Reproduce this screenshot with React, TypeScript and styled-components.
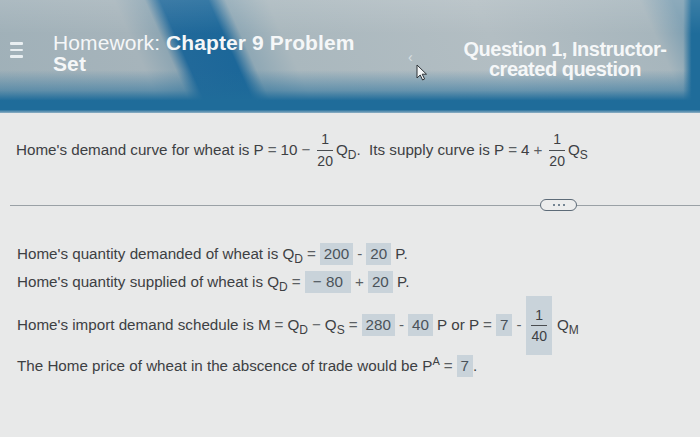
import type { FC, ReactNode } from 'react';
import styled, { createGlobalStyle } from 'styled-components';

const GlobalStyle = createGlobalStyle`
  html, body {
    margin: 0;
    padding: 0;
    background: #e8e9e9;
  }
  body {
    font-family: 'Liberation Sans', Arial, sans-serif;
    color: #3d4043;
  }
`;

const Page = styled.div`
  width: 700px;
  height: 437px;
  overflow: hidden;
  background: #e8e9e9;
`;

const Header = styled.header`
  height: 113px;
  display: flex;
  align-items: flex-start;
  padding: 32px 0 0 10px;
  box-sizing: border-box;
  color: #f5f7f8;
  background:
    linear-gradient(to bottom, rgba(255, 255, 255, 0.12) 0, transparent 30%, transparent 62%, rgba(31, 108, 154, 0.5) 80%, #1f6c9a 89%, #1f6c9a 97%, #8fb0c4 100%),
    linear-gradient(to right, transparent 0, transparent 97.6%, #1f6c9a 98.8%),
    linear-gradient(66deg, #9fb0b8 0, #a6b4bb 150px, #8ea6b3 178px, #21699a 192px, #1c6799 236px, #8fa8b5 252px, #aab8be 290px, #b3bec3 480px, #a7b6bd 630px, #7d9fb2 660px);
`;

const MenuButton = styled.div`
  width: 13px;
  display: flex;
  flex-direction: column;
  gap: 4px;
  margin-top: 10px;

  span {
    display: block;
    height: 2.5px;
    background: #e9eff2;
    border-radius: 1px;
  }
`;

const Title = styled.h1`
  margin: 0 0 0 30px;
  width: 322px;
  font-size: 21px;
  line-height: 21px;
  font-weight: 700;
  letter-spacing: 0.1px;
`;

const TitleLead = styled.span`
  font-weight: 400;
  margin-right: 6px;
`;

const Nav = styled.div`
  width: 70px;
  margin-left: 10px;
  display: flex;
  flex-direction: column;
  align-items: flex-start;
  padding-top: 18px;
  padding-left: 23px;
  box-sizing: border-box;
`;

const Chevron = styled.span`
  font-size: 14px;
  line-height: 14px;
  color: #d9e0e3;
`;

const QuestionLabel = styled.h2`
  margin: 7px 0 0 0;
  width: 220px;
  text-align: center;
  font-size: 20px;
  line-height: 20px;
  font-weight: 700;
  letter-spacing: -0.5px;
`;

const Intro = styled.div`
  padding: 15px 16px 0;
  height: 85px;
  box-sizing: border-box;
`;

const MathLine = styled.div<{ $height?: number }>`
  line-height: ${({ $height }) => $height ?? 28}px;
  white-space: nowrap;
  font-size: 15.2px;
`;

const FracBox = styled.span<{ $filled?: boolean }>`
  display: inline-flex;
  flex-direction: column;
  align-items: center;
  vertical-align: middle;
  font-size: 14px;
  line-height: ${({ $filled }) => ($filled ? 18 : 19)}px;
  padding: ${({ $filled }) => ($filled ? '10px 5px' : '0 2px')};
  margin: ${({ $filled }) => ($filled ? '0 5px 0 1px' : '0 1px')};
  background: ${({ $filled }) => ($filled ? '#c9d3da' : 'transparent')};
`;

const FracBar = styled.span`
  display: block;
  align-self: stretch;
  height: 1px;
  background: #4a4d50;
  margin: 1px 0;
`;

const Sub = styled.sub`
  font-size: 12px;
  vertical-align: -4px;
  line-height: 0;
`;

const Sup = styled.sup`
  font-size: 11px;
  vertical-align: 6px;
  line-height: 0;
`;

const Op = styled.span`
  margin: 0 4px;
  color: #5b5f63;
`;

const Answer = styled.span`
  display: inline-block;
  background: #c9d3da;
  padding: 2px 4px;
  line-height: 18px;
  color: #4a5259;
`;

const Divider = styled.div`
  display: flex;
  align-items: center;
  padding-left: 10px;
  height: 14px;
`;

const Rule = styled.span<{ $width?: number }>`
  height: 1px;
  background: #9aa1a6;
  ${({ $width }) => ($width ? `width: ${$width}px;` : 'flex: 1;')}
`;

const MorePill = styled.button`
  width: 37px;
  height: 12px;
  padding: 0;
  border: 1.5px solid #5d6b78;
  border-radius: 6px;
  background: #eceded;
  display: flex;
  align-items: center;
  justify-content: center;
  gap: 3px;

  i {
    width: 2px;
    height: 2px;
    background: #4d6275;
    border-radius: 50%;
  }
`;

const Answers = styled.div`
  padding: 28px 17px 0;
`;

const Frac: FC<{ top: ReactNode; bottom: ReactNode; filled?: boolean }> = ({ top, bottom, filled }) => (
  <FracBox $filled={filled}>
    <span>{top}</span>
    <FracBar />
    <span>{bottom}</span>
  </FracBox>
);

const Cursor = () => (
  <svg width="12" height="17" viewBox="0 0 12 17" style={{ marginTop: 0, marginLeft: 8 }}>
    <path d="M1 1 L1 14 L4.2 11 L6.6 16 L8.6 15 L6.2 10.2 L10.5 10.2 Z" fill="#f4f6f7" stroke="#2b3035" strokeWidth="1" strokeLinejoin="round" />
  </svg>
);

const App = () => (
  <Page>
    <GlobalStyle />
    <Header>
      <MenuButton>
        <span />
        <span />
        <span />
      </MenuButton>
      <Title>
        <TitleLead>Homework:</TitleLead>
        <span>Chapter 9 Problem</span>
        <br />
        <span>Set</span>
      </Title>
      <Nav>
        <Chevron>‹</Chevron>
        <Cursor />
      </Nav>
      <QuestionLabel>
        Question 1, Instructor-
        <br />
        created question
      </QuestionLabel>
    </Header>

    <Intro>
      <MathLine $height={44}>
        Home's demand curve for wheat is P<Op>=</Op>10<Op>−</Op>
        <Frac top="1" bottom="20" />
        Q<Sub>D</Sub>. &nbsp;Its supply curve is P<Op>=</Op>4<Op>+</Op>
        <Frac top="1" bottom="20" />
        Q<Sub>S</Sub>
      </MathLine>
    </Intro>

    <Divider>
      <Rule $width={530} />
      <MorePill aria-label="more">
        <i />
        <i />
        <i />
      </MorePill>
      <Rule />
    </Divider>

    <Answers>
      <MathLine>
        Home's quantity demanded of wheat is Q<Sub>D</Sub>
        <Op>=</Op>
        <Answer>200</Answer>
        <Op>-</Op>
        <Answer>20</Answer>&nbsp;P.
      </MathLine>
      <MathLine>
        Home's quantity supplied of wheat is Q<Sub>D</Sub>
        <Op>=</Op>
        <Answer>&nbsp;− 80&nbsp;</Answer>
        <Op>+</Op>
        <Answer>20</Answer>&nbsp;P.
      </MathLine>
      <MathLine $height={52}>
        Home's import demand schedule is M<Op>=</Op>Q<Sub>D</Sub>
        <Op>−</Op>Q<Sub>S</Sub>
        <Op>=</Op>
        <Answer>280</Answer>
        <Op>-</Op>
        <Answer>40</Answer>&nbsp;P or P<Op>=</Op>
        <Answer>7</Answer>
        <Op>-</Op>
        <Frac top="1" bottom="40" filled />
        Q<Sub>M</Sub>
      </MathLine>
      <MathLine $height={20}>
        The Home price of wheat in the abscence of trade would be P<Sup>A</Sup>
        <Op>=</Op>
        <Answer>7</Answer>.
      </MathLine>
    </Answers>
  </Page>
);

export default App;
